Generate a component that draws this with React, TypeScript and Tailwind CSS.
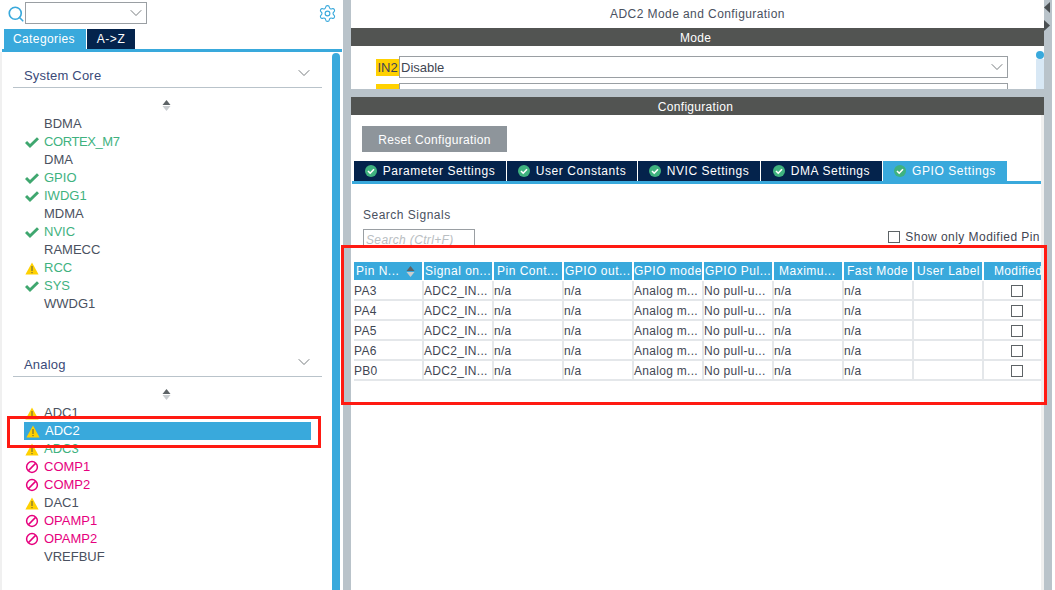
import { ChevronDown, Search, Settings } from 'lucide-react'

type Status = 'ok' | 'warn' | 'ban' | 'none'
type Item = { name: string; status: Status; color?: string }

const coreItems: Item[] = [
  { name: 'BDMA', status: 'none' },
  { name: 'CORTEX_M7', status: 'ok', color: 'text-[#3fb27f]' },
  { name: 'DMA', status: 'none' },
  { name: 'GPIO', status: 'ok', color: 'text-[#3fb27f]' },
  { name: 'IWDG1', status: 'ok', color: 'text-[#3fb27f]' },
  { name: 'MDMA', status: 'none' },
  { name: 'NVIC', status: 'ok', color: 'text-[#3fb27f]' },
  { name: 'RAMECC', status: 'none' },
  { name: 'RCC', status: 'warn', color: 'text-[#3fb27f]' },
  { name: 'SYS', status: 'ok', color: 'text-[#3fb27f]' },
  { name: 'WWDG1', status: 'none' },
]

const analogItems: Item[] = [
  { name: 'ADC1', status: 'warn' },
  { name: 'ADC2', status: 'warn', color: 'selected' },
  { name: 'ADC3', status: 'warn', color: 'text-[#3fb27f]' },
  { name: 'COMP1', status: 'ban', color: 'text-[#e6007e]' },
  { name: 'COMP2', status: 'ban', color: 'text-[#e6007e]' },
  { name: 'DAC1', status: 'warn' },
  { name: 'OPAMP1', status: 'ban', color: 'text-[#e6007e]' },
  { name: 'OPAMP2', status: 'ban', color: 'text-[#e6007e]' },
  { name: 'VREFBUF', status: 'none' },
]

const headers = [
  { label: 'Pin N...', pad: 'pl-[2px]' },
  { label: 'Signal on...', pad: 'pl-[1px]' },
  { label: 'Pin Cont...', pad: 'pl-[3px]' },
  { label: 'GPIO out...', pad: 'pl-[1px]' },
  { label: 'GPIO mode', pad: 'pl-0' },
  { label: 'GPIO Pul...', pad: 'pl-[1px]' },
  { label: 'Maximu...', pad: 'pl-[5px]' },
  { label: 'Fast Mode', pad: 'pl-[3px]' },
  { label: 'User Label', pad: 'pl-[3px]' },
  { label: 'Modified', pad: 'pl-[10px]' },
]
const pins = ['PA3', 'PA4', 'PA5', 'PA6', 'PB0']
const tabs = [
  { label: 'Parameter Settings', w: 'w-[152px]' },
  { label: 'User Constants', w: 'w-[130px]' },
  { label: 'NVIC Settings', w: 'w-[122px]' },
  { label: 'DMA Settings', w: 'w-[121px]' },
]

function StatusIcon({ status }: { status: Status }) {
  if (status === 'ok')
    return (
      <svg width="14" height="14" viewBox="0 0 14 14">
        <path d="M1 7 L5 11 L13 3.2" fill="none" stroke="#3fa76f" strokeWidth="3" />
      </svg>
    )
  if (status === 'warn')
    return (
      <svg width="14" height="13" viewBox="0 0 14 13">
        <path d="M7 0.5 L13.6 12.5 H0.4 Z" fill="#ffd100" />
        <path d="M7 4 V9" stroke="#5a5a40" strokeWidth="1" />
        <path d="M7 10 V11.2" stroke="#5a5a40" strokeWidth="1" />
      </svg>
    )
  if (status === 'ban')
    return (
      <svg width="14" height="14" viewBox="0 0 14 14">
        <circle cx="7" cy="7" r="5.4" fill="none" stroke="#e6007e" strokeWidth="1.5" />
        <path d="M3.4 10.6 L10.6 3.4" stroke="#e6007e" strokeWidth="1.5" />
      </svg>
    )
  return null
}

function SortIcon() {
  return (
    <svg width="9" height="13" viewBox="0 0 9 13">
      <path d="M4.5 1 L8.5 6 H0.5 Z" fill="#5d6366" />
      <path d="M4.5 12 L8.5 7 H0.5 Z" fill="#c9cdd0" />
    </svg>
  )
}

function TabCheck() {
  return (
    <svg width="12" height="12" viewBox="0 0 12 12" className="shrink-0">
      <circle cx="6" cy="6" r="6" fill="#3fb27f" />
      <path d="M3 6 L5.2 8.2 L9 4.2" fill="none" stroke="#fff" strokeWidth="1.6" />
    </svg>
  )
}

function Row({ item }: { item: Item }) {
  const selected = item.color === 'selected'
  return (
    <div className={`flex h-[18px] items-center ${selected ? 'ml-[-1px] mr-[21px]' : ''}`}>
      <div className={`flex h-[18px] w-full items-center ${selected ? 'bg-[#39a9dc] pl-[2px] text-white' : item.color ?? 'text-[#4a5160]'}`}>
        <span className="flex w-[19px] shrink-0 justify-start">
          <StatusIcon status={item.status} />
        </span>
        <span className={`text-[13px] ${item.name === 'CORTEX_M7' ? 'tracking-[-0.4px]' : ''}`}>{item.name}</span>
      </div>
    </div>
  )
}

function Group({ title, items, spacer }: { title: string; items: Item[]; spacer: string }) {
  return (
    <div>
      <div className="ml-[11px] flex h-[24px] w-[309px] items-start justify-between border-b border-[#b9c3ca] pl-[11px] pr-[8px]">
        <span className="mt-[3px] text-[13px] leading-[18px] tracking-[0.2px] text-[#3a4a78]">{title}</span>
        <ChevronDown size={20} strokeWidth={1} className="-mt-[1px] text-[#5d6366]" />
      </div>
      <div className="ml-[160px] mt-[11px] mb-[3px] flex h-[13px]">
        <SortIcon />
      </div>
      <div className="ml-[23px]">
        {items.map((item) => (
          <Row key={item.name} item={item} />
        ))}
      </div>
      <div className={spacer} />
    </div>
  )
}

export default function App() {
  return (
    <div className="relative flex h-[590px] w-[1055px] overflow-hidden bg-white font-['Liberation_Sans',sans-serif] text-[#3f4653]">
      {/* left panel */}
      <aside className="flex h-full w-[343px] shrink-0 flex-col">
        <div className="flex h-[29px] shrink-0 items-start pt-[2px]">
          <Search size={18} strokeWidth={2.2} className="ml-[7px] mt-[3px] text-[#39a9dc]" />
          <div className="flex h-[22px] w-[122px] items-center justify-end border border-[#9a9fa3]">
            <ChevronDown size={20} strokeWidth={1} className="text-[#5d6366]" />
          </div>
          <Settings size={19} strokeWidth={1.4} className="ml-[171px] mt-[2px] text-[#39a9dc]" />
        </div>
        <div className="flex h-[20px] shrink-0 pl-[4px]">
          <div className="flex w-[82px] items-center justify-center bg-[#39a9dc] pr-[2px] text-[12px] tracking-[0.4px] text-white">Categories</div>
          <div className="ml-[1px] flex w-[48px] items-center justify-center bg-[#04234c] text-[12px] tracking-[0.6px] text-white">A-&gt;Z</div>
        </div>
        <div className="ml-[2px] h-[3px] w-[340px] shrink-0 bg-[#39a9dc]" />
        <div className="flex min-h-0 flex-1 border-l-2 border-[#f0f0f0]">
          <div className="w-[330px] overflow-hidden pt-[12px]">
            <Group title="System Core" items={coreItems} spacer="h-[40px]" />
            <Group title="Analog" items={analogItems} spacer="h-0" />
          </div>
          <div className="mt-[1px] w-[8px] rounded-t-[4px] bg-[#39a9dc]" />
        </div>
      </aside>

      <div className="w-[8px] shrink-0 bg-[#b9c3ca]" />

      {/* right panel */}
      <main className="flex h-full w-[693px] shrink-0 flex-col">
        <div className="flex h-[28px] shrink-0 items-center justify-center text-[12px] tracking-[0.42px] text-[#4a5160]">ADC2 Mode and Configuration</div>
        <div className="flex h-[18px] shrink-0 items-center justify-center bg-[#525452] pt-[1px] pr-[4px] text-[12px] tracking-[0.3px] text-white">Mode</div>
        <div className="flex h-[43px] shrink-0 justify-between overflow-hidden">
          <div className="ml-[25px] pt-[10px]">
            <div className="flex">
              <span className="mt-[3px] flex h-[17px] w-[23px] items-center justify-center bg-[#ffd100] text-[13px]">IN2</span>
              <div className="flex h-[22px] w-[609px] items-center justify-between border border-[#9a9fa3] pl-[1px]">
                <span className="mt-[1px] text-[13px]">Disable</span>
                <ChevronDown size={20} strokeWidth={1} className="text-[#5d6366]" />
              </div>
            </div>
            <div className="mt-[5px] flex">
              <span className="mt-[1px] h-[17px] w-[23px] bg-[#ffd100]" />
              <div className="h-[22px] w-[609px] border border-[#9a9fa3]" />
            </div>
          </div>
          <div className="flex w-[8px] flex-col">
            <div className="mt-[5px] h-[8px] rounded-full bg-[#39a9dc]" />
            <div className="flex-1 bg-[#d8e8f5]" />
          </div>
        </div>
        <div className="h-[8px] shrink-0 bg-[#b9c3ca]" />
        <div className="flex h-[18px] shrink-0 items-center justify-center bg-[#525452] pt-[1px] pr-[4px] text-[12px] tracking-[0.3px] text-white">Configuration</div>

        <div className="flex min-h-0 flex-1">
          <div className="w-[690px] shrink-0">
            <div className="ml-[11px] mt-[11px] flex h-[26px] w-[145px] items-center justify-center bg-[#8e959b] pt-[1px] text-[12px] tracking-[0.35px] text-white">Reset Configuration</div>
            <div className="ml-[3px] mt-[9px] flex h-[20px] gap-[1px]">
              {tabs.map((t) => (
                <div key={t.label} className={`flex ${t.w} items-center justify-center gap-[6px] bg-[#04234c] text-[12px] tracking-[0.55px] text-white`}>
                  <TabCheck />
                  {t.label}
                </div>
              ))}
              <div className="flex w-[124px] items-center justify-center gap-[6px] bg-[#39a9dc] text-[12px] tracking-[0.55px] text-white">
                <TabCheck />
                GPIO Settings
              </div>
            </div>
            <div className="ml-[1px] h-[3px] w-[690px] bg-[#39a9dc]" />

            <div className="ml-[12px] mt-[23px] text-[12px] leading-[16px] tracking-[0.5px] text-[#4a5160]">Search Signals</div>
            <div className="flex items-start justify-between">
              <div className="ml-[12px] mt-[6px] flex h-[19px] w-[112px] items-center border border-[#9a9fa3] pl-[2px] pt-[2px] text-[12px] italic tracking-[0.35px] text-[#b9bec2]">Search (Ctrl+F)</div>
              <div className="mr-[1px] mt-[5px] flex items-center gap-[5px] text-[12px] tracking-[0.45px]">
                <span className="h-[12px] w-[12px] border border-[#5d6366]" />
                Show only Modified Pin
              </div>
            </div>

            <div className="ml-[3px] mt-[14px] w-[687px]">
              <div className="grid h-[18px] grid-cols-[repeat(9,68px)_57px] gap-x-[2px]">
                {headers.map((h, i) => (
                  <div key={h.label} className={`flex items-center justify-between overflow-hidden bg-[#39a9dc] ${h.pad} ${i === 0 ? 'pr-[7px]' : ''} text-[12px] ${i === 9 ? 'tracking-[0.35px]' : 'tracking-[0.5px]'} text-white`}>
                    <span className="whitespace-nowrap">{h.label}</span>
                    {i === 0 && <SortIcon />}
                  </div>
                ))}
              </div>
              <div className="mt-[1px]">
                {pins.map((pin) => (
                  <div key={pin} className="grid h-[20px] grid-cols-[repeat(9,70px)_57px] border-b-2 border-[#e4e7ea] text-[12px] text-[#3f4653]">
                    {[pin, 'ADC2_IN...', 'n/a', 'n/a', 'Analog m...', 'No pull-u...', 'n/a', 'n/a', ''].map((c, i) => (
                      <div key={i} className="flex items-center border-r-2 border-[#e4e7ea] pt-[1px] tracking-[0.3px]">{c}</div>
                    ))}
                    <div className="flex items-center justify-center pl-[8px]">
                      <span className="h-[12px] w-[12px] border border-[#5d6366]" />
                    </div>
                  </div>
                ))}
              </div>
            </div>
          </div>
          <div className="w-[3px] bg-[#f0f0f0]" />
        </div>
      </main>

      <div className="flex w-[8px] shrink-0 flex-col gap-[7px] bg-[#b9c3ca] pt-[2px]">
        <svg width="6" height="11" viewBox="0 0 6 11"><path d="M6 0 V11 L0 5.5 Z" fill="#4a4f52" /></svg>
        <svg width="6" height="11" viewBox="0 0 6 11"><path d="M0 0 V11 L6 5.5 Z" fill="#4a4f52" /></svg>
      </div>
      <div className="flex-1 bg-white" />

      {/* annotations drawn over the screenshot */}
      <div className="absolute left-[341px] top-[245px] h-[160px] w-[706px] border-[3px] border-[#ff1a12]" />
      <div className="absolute left-[7px] top-[416px] h-[32px] w-[314px] border-[3px] border-[#ff1a12]" />
    </div>
  )
}
